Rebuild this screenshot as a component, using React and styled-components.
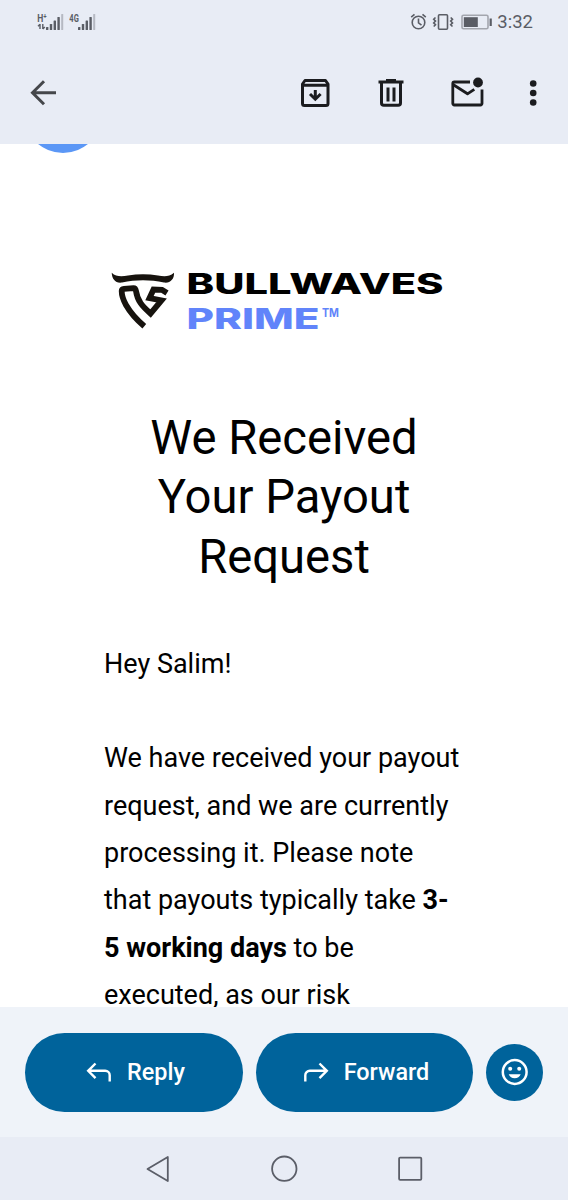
import React from "react";
import styled, { createGlobalStyle } from "styled-components";

const GlobalStyle = createGlobalStyle`
  * {
    margin: 0;
    padding: 0;
    box-sizing: border-box;
  }

  body {
    background-color: #fff;
    font-family: Roboto, "Liberation Sans", sans-serif;
  }

  svg {
    display: block;
    flex-shrink: 0;
  }
`;

const Screen = styled.div`
  width: 568px;
  height: 1200px;
  display: flex;
  flex-direction: column;
  overflow: hidden;
`;

const TopArea = styled.header`
  height: 143.5px;
  flex-shrink: 0;
  background-color: #e8ecf5;
`;

const StatusBar = styled.div`
  height: 43px;
  padding: 0 35px 0 37px;
  display: flex;
  justify-content: space-between;
  align-items: center;
  color: #5a5d65;
`;

const StatusGroup = styled.div`
  display: flex;
  align-items: center;
  gap: ${(props) => props.$gap}px;
`;

const Clock = styled.span`
  font-size: 18.5px;
  line-height: 22px;
  margin-left: 3px;
`;

const Toolbar = styled.div`
  height: 100px;
  padding: 0 16px 0 24px;
  display: flex;
  align-items: center;
  justify-content: space-between;
  color: #1b1c1f;
`;

const Actions = styled.div`
  display: flex;
  align-items: center;
  gap: 38px;
`;

const IconButton = styled.button`
  border: none;
  background: none;
  color: ${(props) => props.$color || "inherit"};
`;

const MoreButton = styled(IconButton)`
  margin-left: -10px;
`;

const Message = styled.main`
  flex: 1;
  min-height: 0;
  overflow: hidden;
  padding: 0 104px;
  background-color: #fff;
`;

const Avatar = styled.div`
  width: 78px;
  height: 78px;
  margin: -69px 0 0 -80px;
  border-radius: 50%;
  background-color: #5b97f6;
`;

const LogoBox = styled.div`
  margin: 110.5px 0 0 4px;
`;

const Title = styled.h1`
  margin-top: 66px;
  font-size: 47.2px;
  font-weight: 400;
  line-height: 59.25px;
  text-align: center;
  color: #000;
`;

const Paragraph = styled.p`
  margin-top: ${(props) => props.$top}px;
  width: 362px;
  font-size: 27px;
  line-height: 47.3px;
  color: #000;
`;

const ReplyBar = styled.div`
  height: 130px;
  flex-shrink: 0;
  padding: 25.5px 25px 0;
  display: flex;
  gap: 13px;
  background-color: #eff3f9;
`;

const PillButton = styled.button`
  width: 217.5px;
  height: 79px;
  border: none;
  border-radius: 40px;
  display: flex;
  align-items: center;
  justify-content: center;
  gap: 15px;
  padding-left: 3.5px;
  background-color: #00639b;
  color: #fff;
  font-family: inherit;
  font-size: 23.4px;
  font-weight: 500;
`;

const EmojiButton = styled.button`
  width: 57px;
  height: 57px;
  margin-top: 11px;
  border: none;
  border-radius: 50%;
  display: flex;
  align-items: center;
  justify-content: center;
  background-color: #00639b;
  color: #fff;
`;

const NavBar = styled.nav`
  height: 63px;
  flex-shrink: 0;
  padding-right: 1px;
  display: flex;
  align-items: center;
  justify-content: center;
  gap: 98px;
  background-color: #e8ecf5;
  color: #5b5e68;
`;

function Signal({ label, arrows }) {
  return (
    <svg width="27" height="18" viewBox="0 0 27 18" fill="currentColor">
      <text x="0.3" y="8.5" fontSize="11" fontWeight="700" textLength="9.5" lengthAdjust="spacingAndGlyphs">
        {label}
      </text>
      {arrows && (
        <path d="M3 16v-5M1 13.200l2-2M5.800 11v5M7.800 14l-2 2" stroke="currentColor" strokeWidth="1.4" fill="none" />
      )}
      <rect x="9" y="14" width="2.4" height="3" rx=".6" />
      <rect x="12.8" y="11" width="2.4" height="6" rx=".6" />
      <rect x="16.6" y="7.5" width="2.4" height="9.5" rx=".6" />
      <rect x="20.4" y="4" width="2.4" height="13" rx=".6" />
      <rect x="24.2" y="1" width="2" height="16" rx=".6" opacity=".35" />
    </svg>
  );
}

function StatusIcons() {
  return (
    <svg width="82" height="18" viewBox="0 0 82 18" fill="none" stroke="currentColor" strokeWidth="1.6">
      <circle cx="8.5" cy="9.5" r="6.3" />
      <path d="M8.500 5.500v4.300l3 2.300M1.200 4.200 4.500 1.400M15.800 4.200 12.500 1.400" />
      <rect x="28.5" y="1.8" width="9" height="14.4" rx="1" />
      <path d="M25.500 4.500l-1.800 1.800 1.800 1.800-1.800 1.800 1.800 1.800-1.800 1.800M40.700 4.500l1.800 1.800-1.800 1.800 1.800 1.800-1.800 1.800 1.800 1.800" />
      <rect x="52" y="2.3" width="26" height="13.5" rx="1.5" stroke="#a3a6ae" />
      <rect x="53.8" y="4.2" width="14" height="9.8" fill="currentColor" stroke="none" />
      <path d="M80.700 5.500v7.500" strokeWidth="2.2" />
    </svg>
  );
}

function BackIcon() {
  return (
    <svg width="38" height="38" viewBox="0 0 38 38" fill="none" stroke="currentColor" strokeWidth="3">
      <path d="M32 18.700H9M20 7.200 8.500 18.700 20 30.200" />
    </svg>
  );
}

function ArchiveIcon() {
  return (
    <svg width="38" height="38" viewBox="0 0 38 38" fill="none" stroke="currentColor" strokeWidth="3" strokeLinejoin="round">
      <path d="M6.500 10v19.500a2 2 0 0 0 2 2h21.500a2 2 0 0 0 2-2V10L29.500 6.500H9zM6.500 11.300h25.500" />
      <path d="M19.300 16v8.500M14 20l5.300 5.200L24.600 20" strokeLinejoin="miter" />
    </svg>
  );
}

function TrashIcon() {
  return (
    <svg width="38" height="38" viewBox="0 0 38 38" fill="none" stroke="currentColor" strokeWidth="3">
      <path d="M6.500 8h25M14 6.500h10" />
      <path d="M9.500 8v21a2.300 2.300 0 0 0 2.300 2.300h14.400a2.300 2.300 0 0 0 2.300-2.300V8M16 13.500v14M22 13.500v14" />
    </svg>
  );
}

function UnreadIcon() {
  return (
    <svg width="38" height="38" viewBox="0 0 38 38" fill="none" stroke="currentColor" strokeWidth="2.8" strokeLinejoin="round">
      <path d="M22 8H6.300a1.500 1.500 0 0 0-1.500 1.500v20A1.500 1.500 0 0 0 6.300 31h26.200a1.500 1.500 0 0 0 1.500-1.500V15.500" />
      <path d="M5 10.500l14.500 9.300 6.800-4.500" />
      <circle cx="30" cy="8.5" r="4.9" fill="currentColor" stroke="none" />
    </svg>
  );
}

function MoreIcon() {
  return (
    <svg width="38" height="38" viewBox="0 0 38 38" fill="currentColor">
      <circle cx="19.2" cy="9.5" r="3.3" />
      <circle cx="19.2" cy="19" r="3.3" />
      <circle cx="19.2" cy="28.5" r="3.3" />
    </svg>
  );
}

function Logo() {
  return (
    <svg width="340" height="80" viewBox="0 0 340 80">
      <path
        d="M3.700 9.700C8 14 14 13.500 20 12.500 30 10.800 40 10.800 50 12.500 56 13.500 61 14 66 9.700 66.500 16 62 20.500 56 19.500 42 16.500 28 16.500 14 19.500 7.500 20.500 4 16 3.700 9.700z"
        fill="#17130e"
      />
      <path
        d="M36.300 63.200C29 57 22 49 18 42 15 36.500 13.700 31 13.700 28Q13.700 26 16 25.800L25.500 25.200Q27.500 25.200 28 28C29.500 38 34 43 42.500 50.500L53.500 37.300 41.500 35 45.500 26.500 54 26.800 59 30"
        fill="none"
        stroke="#17130e"
        strokeWidth="5.8"
      />
      <g fontFamily="Inter, Roboto, sans-serif" fontWeight="800">
        <text x="78.5" y="30.5" fontSize="28.5" fill="#000" textLength="257" lengthAdjust="spacingAndGlyphs">
          BULLWAVES
        </text>
        <text x="78.5" y="66.3" fontSize="28.5" fill="#6184fa" textLength="133" lengthAdjust="spacingAndGlyphs">
          PRIME
        </text>
        <text x="214" y="54.3" fontSize="11.5" fontWeight="700" fill="#6184fa" textLength="17" lengthAdjust="spacingAndGlyphs">
          TM
        </text>
      </g>
    </svg>
  );
}

function ReplyIcon() {
  return (
    <svg width="26" height="22" viewBox="0 0 26 22" fill="none" stroke="currentColor" strokeWidth="2.4">
      <path d="M23.700 20.500v-6.200a4.500 4.500 0 0 0-4.500-4.500H2.500M9.500 2.500 2.200 9.800l7.300 7.300" />
    </svg>
  );
}

function ForwardIcon() {
  return (
    <svg width="26" height="22" viewBox="0 0 26 22" fill="none" stroke="currentColor" strokeWidth="2.4">
      <path d="M2.300 20.500v-6.200a4.500 4.500 0 0 1 4.500-4.500h16.700M16.500 2.500l7.300 7.300-7.300 7.300" />
    </svg>
  );
}

function SmileIcon() {
  return (
    <svg width="28" height="28" viewBox="0 0 28 28" fill="currentColor">
      <circle cx="13.7" cy="14" r="11.9" fill="none" stroke="currentColor" strokeWidth="2.5" />
      <circle cx="9.2" cy="10.8" r="2" />
      <circle cx="18.2" cy="10.8" r="2" />
      <path d="M7.700 16.300h12a6.500 6.500 0 0 1-12 0z" />
    </svg>
  );
}

function App() {
  return (
    <>
      <GlobalStyle />
      <Screen>
        <TopArea>
          <StatusBar>
            <StatusGroup $gap={5}>
              <Signal label="H⁺" arrows />
              <Signal label="4G" />
            </StatusGroup>
            <StatusGroup $gap={2}>
              <StatusIcons />
              <Clock>3:32</Clock>
            </StatusGroup>
          </StatusBar>
          <Toolbar>
            <IconButton $color="#45474b" aria-label="Back">
              <BackIcon />
            </IconButton>
            <Actions>
              <IconButton aria-label="Archive">
                <ArchiveIcon />
              </IconButton>
              <IconButton aria-label="Delete">
                <TrashIcon />
              </IconButton>
              <IconButton aria-label="Mark unread">
                <UnreadIcon />
              </IconButton>
              <MoreButton aria-label="More">
                <MoreIcon />
              </MoreButton>
            </Actions>
          </Toolbar>
        </TopArea>

        <Message>
          <Avatar />
          <LogoBox>
            <Logo />
          </LogoBox>
          <Title>
            We Received
            <br />
            Your Payout
            <br />
            Request
          </Title>
          <Paragraph $top={54}>Hey Salim!</Paragraph>
          <Paragraph $top={47.4}>
            We have received your payout
            <br />
            request, and we are currently
            <br />
            processing it. Please note
            <br />
            that payouts typically take <b>3-</b>
            <br />
            <b>5 working days</b> to be
            <br />
            executed, as our risk
          </Paragraph>
        </Message>

        <ReplyBar>
          <PillButton>
            <ReplyIcon />
            Reply
          </PillButton>
          <PillButton>
            <ForwardIcon />
            Forward
          </PillButton>
          <EmojiButton aria-label="Add reaction">
            <SmileIcon />
          </EmojiButton>
        </ReplyBar>

        <NavBar>
          <svg width="28" height="28" viewBox="0 0 28 28" fill="none" stroke="currentColor" strokeWidth="1.8" strokeLinejoin="round">
            <path d="M23.800 2v24L3.500 14z" />
          </svg>
          <svg width="28" height="28" viewBox="0 0 28 28" fill="none" stroke="currentColor" strokeWidth="1.8">
            <circle cx="14.3" cy="13.7" r="12.2" />
          </svg>
          <svg width="28" height="28" viewBox="0 0 28 28" fill="none" stroke="currentColor" strokeWidth="1.8">
            <rect x="3.1" y="2.6" width="22.2" height="22.2" rx="1" />
          </svg>
        </NavBar>
      </Screen>
    </>
  );
}

export default App;
